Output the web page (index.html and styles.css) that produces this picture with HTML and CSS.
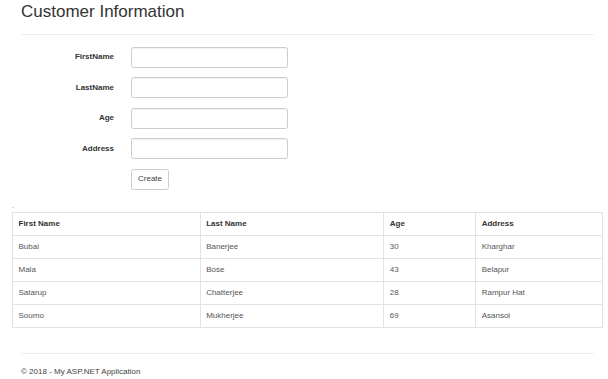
FILE: index.html
```html
<!DOCTYPE html>
<html lang="en">
<head>
  <meta charset="UTF-8">
  <title>Customer Information - My ASP.NET Application</title>
  <link rel="stylesheet" href="styles.css">
</head>
<body>
  <div class="container body-content">
    <h2>Customer Information</h2>
    <hr>

    <!-- Create form -->
    <form class="form-horizontal">
      <div class="form-group">
        <label for="FirstName">FirstName</label>
        <input type="text" id="FirstName" class="form-control">
      </div>
      <div class="form-group">
        <label for="LastName">LastName</label>
        <input type="text" id="LastName" class="form-control">
      </div>
      <div class="form-group">
        <label for="Age">Age</label>
        <input type="text" id="Age" class="form-control">
      </div>
      <div class="form-group">
        <label for="Address">Address</label>
        <input type="text" id="Address" class="form-control">
      </div>
      <div class="form-group">
        <span class="label-spacer"></span>
        <button type="button" class="btn">Create</button>
      </div>
    </form>

    <p class="dot">.</p>

    <!-- Customer list -->
    <table class="table">
      <thead>
        <tr>
          <th class="c1">First Name</th>
          <th class="c2">Last Name</th>
          <th class="c3">Age</th>
          <th class="c4">Address</th>
        </tr>
      </thead>
      <tbody>
        <tr><td>Bubai</td><td>Banerjee</td><td>30</td><td>Kharghar</td></tr>
        <tr><td>Mala</td><td>Bose</td><td>43</td><td>Belapur</td></tr>
        <tr><td>Satarup</td><td>Chatterjee</td><td>28</td><td>Rampur Hat</td></tr>
        <tr><td>Soumo</td><td>Mukherjee</td><td>69</td><td>Asansol</td></tr>
      </tbody>
    </table>

    <hr class="footer-rule">
    <footer>
      <p>&copy; 2018 - My ASP.NET Application</p>
    </footer>
  </div>
</body>
</html>
```

FILE: styles.css
```css
/* Base */
* { box-sizing: border-box; }
body { margin: 0; font-family: 'Liberation Sans', Arial, sans-serif; font-size: 8px; line-height: 1.43; color: #333; background: #fff; }
.container { padding: 0 14px 0 21px; }

h2 { font-size: 17px; font-weight: 400; line-height: 1.1; margin: 3px 0 12px; }
hr { border: 0; border-top: 1px solid #eee; margin: 0; }

/* Form */
.form-horizontal { margin-top: 12px; }
.form-group { display: flex; align-items: center; height: 21px; margin-bottom: 9.5px; }
.form-group label, .label-spacer { width: 110px; flex: none; text-align: right; padding-right: 17px; font-weight: 700; }
.form-control { width: 157px; height: 21px; padding: 3px 7px; border: 1px solid #ccc; border-radius: 2.5px; box-shadow: inset 0 1px 1px rgba(0,0,0,.06); font: inherit; }
.btn { height: 21px; padding: 0 6px; background: #fff; border: 1px solid #ccc; border-radius: 2.5px; font: inherit; color: #444; }

.dot { margin: 3px 0 0 -9px; height: 13px; line-height: 13px; color: #777; font-size: 7px; }

/* Table */
.table { width: calc(100% + 18px); margin: 0 -9px; border-collapse: collapse; }
.table th, .table td { height: 23px; padding: 0 5.5px; border: 1px solid #e3e3e3; text-align: left; vertical-align: middle; }
.table th { font-weight: 700; color: #333; }
.table td { color: #555; }
.c1 { width: 188px; }
.c2 { width: 184px; }
.c3 { width: 92px; }
.c4 { width: 127px; }

/* Footer */
.footer-rule { margin-top: 25px; }
footer p { margin: 12px 0 0; color: #444; }
```
